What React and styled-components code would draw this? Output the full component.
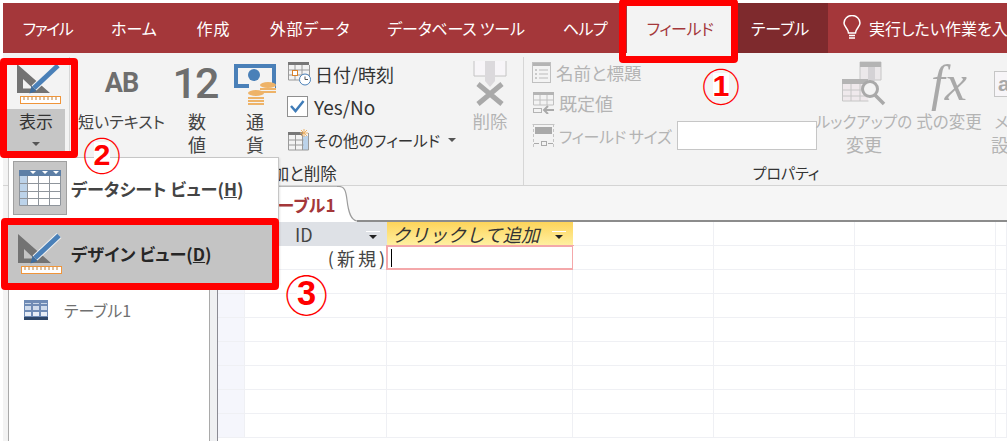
import styled, { createGlobalStyle } from 'styled-components'

const GlobalStyle = createGlobalStyle`
  html, body {
    margin: 0;
    background: #ffffff;
  }
  * {
    box-sizing: border-box;
  }
  body {
    font-family: "Noto Sans CJK JP", "Noto Sans", sans-serif;
    font-feature-settings: 'palt';
  }
`

const Page = styled.div`
  position: relative;
  width: 1007px;
  height: 441px;
  padding: 3px 0 0 3px;
  overflow: hidden;
  background: #ffffff;
  color: #444444;
`

const TabBar = styled.nav`
  display: flex;
  height: 50px;
  background: #a4373a;
`

const Tab = styled.div`
  flex: none;
  display: flex;
  align-items: center;
  justify-content: center;
  width: ${(p) => p.$width}px;
  padding-right: ${(p) => p.$inset || 0}px;
  font-size: 16px;
  letter-spacing: ${(p) => p.$track || 0}px;
  white-space: nowrap;
  color: ${(p) => (p.$active ? '#a4373a' : '#ffffff')};
  background: ${(p) => (p.$active ? '#f3f3f3' : p.$context ? '#7e2a2d' : 'transparent')};
`

const TellMe = styled.div`
  display: flex;
  align-items: center;
  gap: 8px;
  padding-left: 15px;
  font-size: 16px;
  color: #ffffff;
  white-space: nowrap;
`

const Ribbon = styled.section`
  display: flex;
  height: 133px;
  padding-top: 4px;
  overflow: hidden;
  background: #f3f3f3;
  border-bottom: 1px solid #d4d4d4;
`

const ViewGroup = styled.div`
  flex: none;
  width: 67px;
  height: 124px;
  padding-left: 4px;
  border-right: 1px solid #d6d6d6;
`

const ViewIconBox = styled.div`
  display: flex;
  justify-content: center;
  height: 52px;
  padding: 5px 0 0 2px;
`

const ViewLabel = styled.div`
  display: flex;
  flex-direction: column;
  align-items: center;
  width: 58px;
  height: 44px;
  background: #c6c6c6;
  font-size: 17px;
  line-height: 24px;
  color: #333333;
`

const Caret = styled.span`
  display: inline-block;
  width: 0;
  height: 0;
  margin: ${(p) => p.$margin || '7px 0 0'};
  border-left: 4px solid transparent;
  border-right: 4px solid transparent;
  border-top: 4px solid #555555;
`

const RibbonGroup = styled.div`
  flex: none;
  display: flex;
  flex-direction: column;
  width: ${(p) => p.$width}px;
  height: 128px;
  border-right: ${(p) => (p.$divider ? '1px solid #d6d6d6' : 'none')};
`

const GroupBody = styled.div`
  display: flex;
  height: 106px;
  padding-left: ${(p) => p.$pad}px;
`

const GroupLabel = styled.div`
  text-align: center;
  font-size: ${(p) => p.$size || 15}px;
  line-height: 20px;
  color: #333333;
`

const LargeButton = styled.div`
  flex: none;
  display: flex;
  flex-direction: column;
  align-items: center;
  width: ${(p) => p.$width}px;
  font-size: ${(p) => p.$size || 16}px;
  line-height: 22.5px;
  text-align: center;
  white-space: nowrap;
  color: ${(p) => (p.$disabled ? '#b4b4b4' : '#444444')};
`

const LabelLine = styled.span`
  font-size: ${(p) => p.$size || 16}px;
`

const LargeIcon = styled.div`
  flex: none;
  display: flex;
  align-items: center;
  justify-content: center;
  height: 53px;
`

const AbGlyph = styled.span`
  font-family: Roboto, sans-serif;
  font-size: 27px;
  font-weight: 700;
  letter-spacing: -1px;
  color: #6e6e6e;
`

const NumberGlyph = styled.span`
  margin-right: 4px;
  font-family: Roboto, sans-serif;
  font-size: 43px;
  font-weight: 500;
  letter-spacing: -2px;
  color: #6e6e6e;
`

const FxGlyph = styled.span`
  font-family: "Liberation Serif", serif;
  font-size: 50px;
  font-style: italic;
  color: #a9a9a9;
`

const SmallColumn = styled.div`
  flex: none;
  display: flex;
  flex-direction: column;
  width: ${(p) => p.$width}px;
  margin-left: ${(p) => p.$left || 0}px;
`

const SmallRow = styled.div`
  display: flex;
  align-items: center;
  gap: ${(p) => p.$gap || 4}px;
  height: ${(p) => p.$height}px;
  font-size: ${(p) => p.$size || 16}px;
  letter-spacing: ${(p) => p.$track || 0}px;
  white-space: nowrap;
  color: ${(p) => (p.$disabled ? '#b4b4b4' : '#333333')};
`

const SizeInput = styled.div`
  width: 140px;
  height: 29px;
  margin-left: 2px;
  background: #ffffff;
  border: 1px solid #c6c6c6;
`

const Workspace = styled.div`
  display: flex;
  height: 255px;
`

const NavPane = styled.aside`
  flex: none;
  width: 207px;
  padding-left: 5px;
  background: #f3f3f3;
`

const NavInner = styled.div`
  height: 100%;
  padding: 112px 0 0 15px;
  background: #ffffff;
  border-left: 1px solid #a9a9a9;
  border-right: 1px solid #a9a9a9;
`

const NavItem = styled.div`
  display: flex;
  align-items: center;
  gap: 16px;
  font-size: 16px;
  color: #707070;
`

const Splitter = styled.div`
  flex: none;
  width: 8px;
  background: #eff0f2;
  border-right: 1px solid #8b8b93;
`

const Sheet = styled.main`
  flex: 1;
  min-width: 0;
`

const TabStrip = styled.div`
  display: flex;
  height: 36px;
  background: #f6f6f6;
`

const DocTab = styled.div`
  width: 119px;
  padding: 5px 0 0 44px;
  background: #ffffff;
  border-top: 1px solid #b8b8b8;
  font-size: 17px;
  font-weight: 700;
  white-space: nowrap;
  color: #a4373a;
`

const TabRest = styled.div`
  flex: 1;
  border-bottom: 2px solid #8c8c8c;
`

const SheetRow = styled.div`
  display: flex;
  height: 24px;
`

const Cell = styled.div`
  position: relative;
  flex: ${(p) => (p.$width ? 'none' : 1)};
  display: flex;
  align-items: center;
  width: ${(p) => p.$width}px;
  border-right: 1px solid #eff0f4;
  border-bottom: 1px solid #eff0f4;
  background: ${(p) => (p.$selector ? '#f5f6fc' : '#ffffff')};
`

const IdHeader = styled(Cell)`
  justify-content: space-between;
  padding: 0 7px 0 50px;
  background: #dee1e6;
  border: none;
  font-size: 18px;
  color: #444444;
`

const AddHeader = styled(Cell)`
  justify-content: space-between;
  padding: 0 7px 0 5px;
  background: linear-gradient(#fdd45a, #fff1a4);
  border: none;
  font-size: 18.500px;
  font-feature-settings: normal;
  font-style: italic;
  color: #333333;
  white-space: nowrap;
`

const NewCell = styled(Cell)`
  justify-content: flex-end;
  font-size: 18px;
  letter-spacing: 3px;
  color: #444444;
`

const NewText = styled.span`
  margin-right: -2px;
`

const ActiveCell = styled.div`
  position: absolute;
  top: -1px;
  left: -1px;
  right: -2px;
  bottom: -1px;
  border: 2px solid #f4a8aa;
`

const TextCaret = styled.span`
  position: absolute;
  top: 2px;
  left: 3px;
  width: 1px;
  height: 18px;
  background: #000000;
`

const HeaderDrop = styled.span`
  flex: none;
  display: flex;
  justify-content: center;
  width: 14px;
  padding-top: 3px;
  height: 7px;
  border-top: 1px solid #ffffff;
  &::after {
    content: '';
    border-left: 4px solid transparent;
    border-right: 4px solid transparent;
    border-top: 4px solid #222222;
  }
`

const Menu = styled.div`
  position: absolute;
  top: 157px;
  left: 8px;
  width: 271px;
  height: 127px;
  background: #ffffff;
  border: 1px solid #c6c6c6;
  box-shadow: 1px 1px 2px rgba(0, 0, 0, 0.1);
`

const MenuItem = styled.div`
  display: flex;
  align-items: center;
  height: ${(p) => p.$height}px;
  margin-top: ${(p) => p.$top || 0}px;
  padding-left: 4px;
  font-size: 17.200px;
  font-weight: 700;
  background: ${(p) => (p.$selected ? '#c4c4c4' : 'transparent')};
  color: ${(p) => (p.$selected ? '#262626' : '#444444')};
`

const MenuIconBox = styled.div`
  flex: none;
  display: flex;
  align-items: center;
  justify-content: center;
  width: 54px;
  height: 54px;
  margin-right: 4px;
  background: ${(p) => (p.$framed ? '#c6c6c6' : 'transparent')};
  border: ${(p) => (p.$framed ? '1px solid #a0a0a0' : 'none')};
`

const RedBox = styled.div`
  position: absolute;
  top: ${(p) => p.$top}px;
  left: ${(p) => p.$left}px;
  width: ${(p) => p.$width}px;
  height: ${(p) => p.$height}px;
  border: 7px solid #ff0000;
  border-radius: 4px;
`

// the glyph gives the thin ring; the digit is laid over it in bold, as in the reference
const Mark = styled.span`
  position: absolute;
  top: ${(p) => p.$top}px;
  left: ${(p) => p.$left}px;
  display: flex;
  align-items: center;
  justify-content: center;
  font-size: ${(p) => p.$size}px;
  line-height: 1;
  color: #ff0000;
  &::after {
    content: '${(p) => p.$digit}';
    position: absolute;
    font-family: "Liberation Sans", sans-serif;
    font-size: 0.8em;
    font-weight: 700;
    background: #ffffff;
    line-height: 0.8;
  }
`

function DesignIcon() {
  return (
    <svg width="46" height="43" viewBox="0 0 46 43">
      <path fillRule="evenodd" fill="#737373" d="M1 2 L34 31 L1 31 Z M7 17 L7 26.500 L17 26.500 Z" />
      <path d="M42 3.500 L18 26" stroke="#f3f3f3" strokeWidth="7" />
      <path d="M42 3.500 L18 26" stroke="#4a80b8" strokeWidth="5" />
      <path d="M13.500 31.500 L15.500 24 L20.500 29 Z" fill="#3f6d9e" />
      <rect x="4.500" y="34.500" width="40" height="7" fill="#ffffff" stroke="#f0953a" />
      <path
        d="M8 35v3M12 35v3M16 35v3M20 35v3M24 35v3M28 35v3M32 35v3M36 35v3M40 35v3"
        stroke="#b9803f"
      />
    </svg>
  )
}

function MoneyIcon() {
  return (
    <svg width="44" height="44" viewBox="0 0 44 44">
      <path fillRule="evenodd" fill="#4a80b8" d="M1 2 H43 V26 H1 Z M5 6 V22 H39 V6 Z" />
      <circle cx="21" cy="13" r="6" fill="#4a80b8" />
      <path d="M16 22 H42 V36 H16 Z" fill="#f3f3f3" />
      <ellipse cx="35" cy="23" rx="8" ry="3" fill="#eeb368" />
      <path d="M27 27 h16 M27 30 h16" stroke="#eeb368" strokeWidth="2" />
      <ellipse cx="23" cy="31" rx="8" ry="3" fill="#eeb368" />
      <path d="M15 36 h16 M15 39 h16 M15 42 h16" stroke="#eeb368" strokeWidth="2" />
    </svg>
  )
}

function DateIcon() {
  return (
    <svg width="24" height="25" viewBox="0 0 24 25">
      <path d="M1 1h21v3H1z" fill="#777777" />
      <path
        d="M1.500 4v15h21V4M1.500 9h21M1.500 14h21M8 4v15M15 4v15"
        fill="none"
        stroke="#9a9a9a"
      />
      <rect x="5.500" y="9.500" width="5" height="5" fill="#ffffff" stroke="#d9822b" />
      <circle cx="18" cy="18.500" r="5.500" fill="#ffffff" stroke="#4a80b8" />
      <path d="M18 15.500v3h3" fill="none" stroke="#555555" />
    </svg>
  )
}

function CheckIcon() {
  return (
    <svg width="21" height="21" viewBox="0 0 21 21">
      <rect x="0.500" y="0.500" width="20" height="20" fill="#ffffff" stroke="#8f8f8f" />
      <path d="M4 10 L8.500 15 L16.500 5" fill="none" stroke="#3f7cb8" strokeWidth="2.500" />
    </svg>
  )
}

function MoreIcon() {
  return (
    <svg width="23" height="22" viewBox="0 0 23 22">
      <path d="M1 3h15v3H1z" fill="#777777" />
      <path d="M16 7h6v14h-6z" fill="#bcd3ea" />
      <path
        d="M1.500 6v15h20V4M1.500 11h15M1.500 16h15M8.500 6v15M15.500 6v15"
        fill="none"
        stroke="#9a9a9a"
      />
      <path d="M17 0v8M13 4h8M14 1l6 6M20 1l-6 6" stroke="#eeb368" />
    </svg>
  )
}

function DeleteIcon() {
  return (
    <svg width="34" height="46" viewBox="0 0 34 46">
      <path d="M1 0v15h32V0" fill="#f7f5f8" stroke="#c4c4c4" />
      <path d="M12 0h10v20l-5 6-5-6z" fill="#dbd9dc" />
      <path d="M5 23 L29 43 M29 23 L5 43" stroke="#a9a9a9" strokeWidth="5" />
    </svg>
  )
}

function CaptionIcon() {
  return (
    <svg width="19" height="21" viewBox="0 0 19 21">
      <path d="M0 0h19v4H0z" fill="#b4b4b4" />
      <rect x="0.500" y="0.500" width="18" height="20" fill="none" stroke="#c0c0c0" />
      <path d="M7 8h9M7 12h9M7 16h9" stroke="#bbbbbb" />
      <path d="M3 8h2M3 12h2M3 16h2" stroke="#a0a0a0" />
    </svg>
  )
}

function DefaultIcon() {
  return (
    <svg width="23" height="22" viewBox="0 0 23 22">
      <path d="M1 0h21v3H1z" fill="#b4b4b4" />
      <path d="M1.500 3v10h20V3M1.500 8h20M8 3v10M15 3v10" fill="none" stroke="#c0c0c0" />
      <rect x="1.500" y="16.500" width="8" height="4" fill="none" stroke="#b4b4b4" />
      <path d="M22 18h-9M16 14l-4 4 4 4" fill="none" stroke="#aaaaaa" strokeWidth="2" />
    </svg>
  )
}

function SizeIcon() {
  return (
    <svg width="23" height="24" viewBox="0 0 23 24">
      <rect x="3" y="3" width="17" height="7" fill="#a9a9a9" />
      <path d="M1.500 0v24M21.500 0v24" stroke="#c4c4c4" strokeDasharray="3 2" />
      <path d="M0.500 .500h22" stroke="#c4c4c4" />
      <rect x="9.500" y="17.500" width="5" height="4" fill="none" stroke="#aaaaaa" />
      <path d="M2 19.500h5M16 19.500h5" stroke="#aaaaaa" />
    </svg>
  )
}

function LookupIcon() {
  return (
    <svg width="46" height="46" viewBox="0 0 46 46">
      <path d="M19 1h21v18H19z" fill="#ebe8ea" stroke="#c6c6c6" />
      <path d="M19 1h21v5H19z" fill="#b4b4b4" />
      <path d="M27 6h7v14h-7z" fill="#d4d2d5" />
      <path d="M1 18h26v5H1z" fill="#b4b4b4" />
      <path d="M1 23h26v17H1z" fill="#efe9ec" />
      <path d="M1.500 23v17h26M1.500 29h20M1.500 35h26M10 23v17M19 23v17" fill="none" stroke="#c6c6c6" />
      <circle cx="29" cy="28" r="7.500" fill="#f3f3f3" stroke="#a9a9a9" strokeWidth="3" />
      <path d="M34 34 L43 43" stroke="#a9a9a9" strokeWidth="3.500" />
    </svg>
  )
}

function MemoIcon() {
  return (
    <svg width="30" height="26" viewBox="0 0 30 26">
      <rect x="0.500" y="0.500" width="29" height="25" fill="#f7f5f8" stroke="#c6c6c6" />
      <text x="4" y="20" fontFamily="Liberation Sans" fontSize="21" fontWeight="700" fill="#a9a9a9">
        a
      </text>
    </svg>
  )
}

function BulbIcon() {
  return (
    <svg width="18" height="26" viewBox="0 0 18 26">
      <path
        d="M5.500 18 C5 13 1 12 1 8 A8 7.500 0 0 1 17 8 C17 12 13 13 12.500 18 Z"
        fill="none"
        stroke="#ffffff"
        strokeWidth="1.500"
      />
      <path d="M6 20.500h6M6 23h6" stroke="#ffffff" strokeWidth="1.500" />
    </svg>
  )
}

function DatasheetIcon() {
  return (
    <svg width="42" height="36" viewBox="0 0 42 36">
      <rect width="42" height="36" fill="#ffffff" />
      <path d="M0 6h8v30H0z" fill="#bcd3ea" />
      <path d="M0 0h42v6H0z" fill="#5d7fa6" />
      <path d="M11 1h6l-3 3zM23 1h6l-3 3zM34 1h6l-3 3z" fill="#ffffff" />
      <path
        d="M.5 6v29.500h41V6M0 13.500h42M0 21.500h42M0 28.500h42M8.500 6v30M19.500 6v30M30.500 6v30"
        fill="none"
        stroke="#8f959c"
      />
    </svg>
  )
}

function TableIcon() {
  return (
    <svg width="24" height="20" viewBox="0 0 24 20">
      <rect width="24" height="20" fill="#6f8bb5" />
      <path d="M0 17h24v3H0z" fill="#2f4769" />
      <path d="M1 3h6v1H1zM9 3h6v1H9zM17 3h6v1h-6z" fill="#c9d6e8" />
      <path d="M1 6h6v4H1zM9 6h6v4H9zM17 6h6v4h-6z" fill="#cfdbec" />
      <path d="M1 12h6v4H1zM9 12h6v4H9zM17 12h6v4h-6z" fill="#e7edf6" />
    </svg>
  )
}

function TabCurve() {
  return (
    <svg width="20" height="36" viewBox="0 0 20 36" style={{ flex: 'none', display: 'block' }}>
      <path d="M0 0.500 H2 C8 0.500 9 6 10 14 C11.500 27 14 34 20 34.500 V36 H0 Z" fill="#ffffff" />
      <path
        d="M0 0.500 H2 C8 0.500 9 6 10 14 C11.500 27 14 34 20 35"
        fill="none"
        stroke="#9c9c9c"
        strokeWidth="1.200"
      />
    </svg>
  )
}

const extraCols = [141, 141, 141, 0]
const emptyRows = [0, 1, 2, 3, 4, 5, 6]

export default function App() {
  return (
    <Page>
      <GlobalStyle />

      <TabBar>
        <Tab $width={89} $track={-1.5}>ファイル</Tab>
        <Tab $width={84}>ホーム</Tab>
        <Tab $width={75} $track={1}>作成</Tab>
        <Tab $width={118} $track={0.8}>外部データ</Tab>
        <Tab $width={174} $track={-0.2}>データベース ツール</Tab>
        <Tab $width={84} $track={-0.5}>ヘルプ</Tab>
        <Tab $width={111} $active $inset={5} $track={-0.4}>フィールド</Tab>
        <Tab $width={90} $context $inset={6}>テーブル</Tab>
        <TellMe>
          <BulbIcon />
          実行したい作業を入力してください
        </TellMe>
      </TabBar>

      <Ribbon>
        <ViewGroup>
          <ViewIconBox>
            <DesignIcon />
          </ViewIconBox>
          <ViewLabel>
            表示
            <Caret $margin="9px 0 0" />
          </ViewLabel>
        </ViewGroup>

        <RibbonGroup $width={454} $divider>
          <GroupBody $pad={7}>
            <LargeButton $width={89}>
              <LargeIcon>
                <AbGlyph>AB</AbGlyph>
              </LargeIcon>
              短いテキスト
            </LargeButton>
            <LargeButton $width={62} $size={18}>
              <LargeIcon>
                <NumberGlyph>12</NumberGlyph>
              </LargeIcon>
              数<br />値
            </LargeButton>
            <LargeButton $width={54} $size={18}>
              <LargeIcon>
                <MoneyIcon />
              </LargeIcon>
              通<br />貨
            </LargeButton>
            <SmallColumn $width={178} $left={5}>
              <SmallRow $height={33} $size={18}>
                <DateIcon />
                日付/時刻
              </SmallRow>
              <SmallRow $height={33} $gap={6} $size={19}>
                <CheckIcon />
                Yes/No
              </SmallRow>
              <SmallRow $height={33} $gap={4} $size={15.5}>
                <MoreIcon />
                その他のフィールド
                <Caret $margin="1px 0 0 4px" />
              </SmallRow>
            </SmallColumn>
            <LargeButton $width={50} $disabled $size={17.500}>
              <LargeIcon>
                <DeleteIcon />
              </LargeIcon>
              削除
            </LargeButton>
          </GroupBody>
          <GroupLabel $size={16.500}>追加と削除</GroupLabel>
        </RibbonGroup>

        <RibbonGroup $width={524}>
          <GroupBody $pad={8}>
            <SmallColumn $width={288}>
              <SmallRow $height={30} $gap={5} $disabled $size={17.500}>
                <CaptionIcon />
                名前と標題
              </SmallRow>
              <SmallRow $height={32} $disabled $size={18}>
                <DefaultIcon />
                既定値
              </SmallRow>
              <SmallRow $height={33} $disabled $track={-0.4}>
                <SizeIcon />
                フィールド サイズ
                <SizeInput />
              </SmallRow>
            </SmallColumn>
            <LargeButton $width={88} $disabled>
              <LargeIcon>
                <LookupIcon />
              </LargeIcon>
              <LabelLine $size={15.500}>ルックアップの</LabelLine>
              <LabelLine $size={18}>変更</LabelLine>
            </LargeButton>
            <LargeButton $width={82} $disabled $size={16.500}>
              <LargeIcon>
                <FxGlyph>fx</FxGlyph>
              </LargeIcon>
              式の変更
            </LargeButton>
            <LargeButton $width={38} $disabled>
              <LargeIcon>
                <MemoIcon />
              </LargeIcon>
              メモ
              <LabelLine $size={18}>設定</LabelLine>
            </LargeButton>
          </GroupBody>
          <GroupLabel>プロパティ</GroupLabel>
        </RibbonGroup>
      </Ribbon>

      <Workspace>
        <NavPane>
          <NavInner>
            <NavItem>
              <TableIcon />
              テーブル1
            </NavItem>
          </NavInner>
        </NavPane>
        <Splitter />
        <Sheet>
          <TabStrip>
            <DocTab>テーブル1</DocTab>
            <TabCurve />
            <TabRest />
          </TabStrip>

          <SheetRow>
            <Cell $width={27} $selector />
            <IdHeader $width={142}>
              ID
              <HeaderDrop />
            </IdHeader>
            <AddHeader $width={186}>
              クリックして追加
              <HeaderDrop />
            </AddHeader>
            {extraCols.map((w, i) => (
              <Cell key={i} $width={w || undefined} />
            ))}
          </SheetRow>

          <SheetRow>
            <Cell $width={27} $selector />
            <NewCell $width={142}>
              <NewText>(新規)</NewText>
            </NewCell>
            <Cell $width={186}>
              <ActiveCell>
                <TextCaret />
              </ActiveCell>
            </Cell>
            {extraCols.map((w, i) => (
              <Cell key={i} $width={w || undefined} />
            ))}
          </SheetRow>

          {emptyRows.map((r) => (
            <SheetRow key={r}>
              <Cell $width={27} $selector />
              <Cell $width={142} />
              <Cell $width={186} />
              {extraCols.map((w, i) => (
                <Cell key={i} $width={w || undefined} />
              ))}
            </SheetRow>
          ))}
        </Sheet>
      </Workspace>

      <Menu>
        <MenuItem $height={60}>
          <MenuIconBox $framed>
            <DatasheetIcon />
          </MenuIconBox>
          <span>
            データシート ビュー(<u>H</u>)
          </span>
        </MenuItem>
        <MenuItem $height={60} $top={5} $selected>
          <MenuIconBox>
            <DesignIcon />
          </MenuIconBox>
          <span>
            デザイン ビュー(<u>D</u>)
          </span>
        </MenuItem>
      </Menu>

      <RedBox $top={-1} $left={619} $width={119} $height={64} />
      <RedBox $top={58} $left={0} $width={78} $height={100} />
      <RedBox $top={218} $left={1} $width={278} $height={72} />

      <Mark $top={66} $left={702} $size={38} $digit="1">①</Mark>
      <Mark $top={135} $left={83} $size={38} $digit="2">②</Mark>
      <Mark $top={272} $left={285} $size={43} $digit="3">③</Mark>
    </Page>
  )
}
